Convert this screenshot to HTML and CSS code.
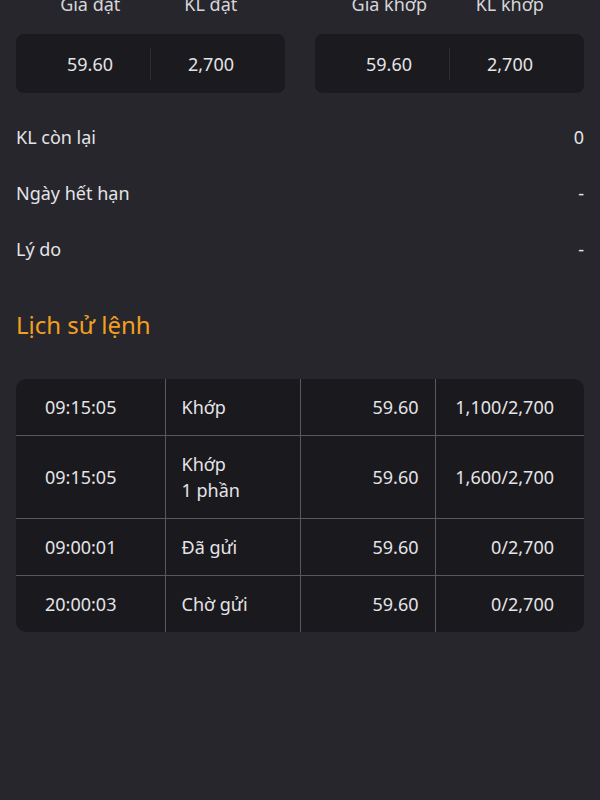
FILE: index.html
```html
<!DOCTYPE html>
<html lang="vi">
<head>
  <meta charset="UTF-8">
  <title>Chi tiết lệnh</title>
  <link rel="stylesheet" href="styles.css">
</head>
<body>
  <div class="page">
    <div class="pair-row">
      <div class="pair">
        <div class="pair-head">
          <span>Giá đặt</span>
          <span>KL đặt</span>
        </div>
        <div class="pair-card">
          <span class="pair-val">59.60</span>
          <span class="pair-sep"></span>
          <span class="pair-val">2,700</span>
        </div>
      </div>
      <div class="pair">
        <div class="pair-head">
          <span>Giá khớp</span>
          <span>KL khớp</span>
        </div>
        <div class="pair-card">
          <span class="pair-val">59.60</span>
          <span class="pair-sep"></span>
          <span class="pair-val">2,700</span>
        </div>
      </div>
    </div>

    <div class="info">
      <div class="info-row"><span>KL còn lại</span><span>0</span></div>
      <div class="info-row"><span>Ngày hết hạn</span><span>-</span></div>
      <div class="info-row"><span>Lý do</span><span>-</span></div>
    </div>

    <h2 class="section-title">Lịch sử lệnh</h2>

    <table class="history">
      <tr>
        <td class="c-time">09:15:05</td>
        <td class="c-status">Khớp</td>
        <td class="c-price">59.60</td>
        <td class="c-qty">1,100/2,700</td>
      </tr>
      <tr>
        <td class="c-time">09:15:05</td>
        <td class="c-status">Khớp<br>1 phần</td>
        <td class="c-price">59.60</td>
        <td class="c-qty">1,600/2,700</td>
      </tr>
      <tr>
        <td class="c-time">09:00:01</td>
        <td class="c-status">Đã gửi</td>
        <td class="c-price">59.60</td>
        <td class="c-qty">0/2,700</td>
      </tr>
      <tr>
        <td class="c-time">20:00:03</td>
        <td class="c-status">Chờ gửi</td>
        <td class="c-price">59.60</td>
        <td class="c-qty">0/2,700</td>
      </tr>
    </table>
  </div>
</body>
</html>
```

FILE: styles.css
```css
body {
  margin: 0;
  background: #27262d;
  font-family: 'Noto Sans', 'Open Sans', sans-serif;
  font-size: 18px;
  color: #e4e4e6;
  overflow: hidden;
}

.page {
  padding: 0 16px;
}

.pair-row {
  display: flex;
  gap: 30px;
  margin-top: -8px;
}

.pair {
  flex: 1;
}

.pair-head {
  display: flex;
  padding: 0 14px;
  line-height: 24px;
  color: #d6d6da;
}

.pair-head span {
  flex: 1;
  text-align: center;
}

.pair-card {
  display: flex;
  align-items: center;
  margin-top: 18px;
  height: 59px;
  padding: 0 14px;
  background: #1b1a1f;
  border-radius: 8px;
}

.pair-val {
  flex: 1;
  text-align: center;
}

.pair-sep {
  width: 1px;
  height: 32px;
  background: #2e2d33;
}

.info {
  margin-top: 16px;
}

.info-row {
  display: flex;
  justify-content: space-between;
  align-items: center;
  height: 56px;
}

.section-title {
  margin: 32px 0 0;
  font-size: 24px;
  font-weight: normal;
  line-height: 32px;
  color: #f3a01f;
}

.history {
  width: 100%;
  margin-top: 38px;
  border-collapse: collapse;
  background: #1a191e;
  border-radius: 10px;
  overflow: hidden;
  table-layout: fixed;
}

.history td {
  padding: 15px 16px;
  line-height: 26px;
  border-top: 1px solid #58585d;
  border-left: 1px solid #58585d;
}

.history tr:first-child td {
  border-top: none;
}

.history td:first-child {
  border-left: none;
}

.c-time {
  width: 149px;
  padding-left: 29px !important;
  box-sizing: border-box;
}

.c-status {
  width: 135px;
  box-sizing: border-box;
}

.c-price {
  width: 135px;
  text-align: right;
  box-sizing: border-box;
}

.c-qty {
  text-align: right;
  padding-right: 30px !important;
}
```
